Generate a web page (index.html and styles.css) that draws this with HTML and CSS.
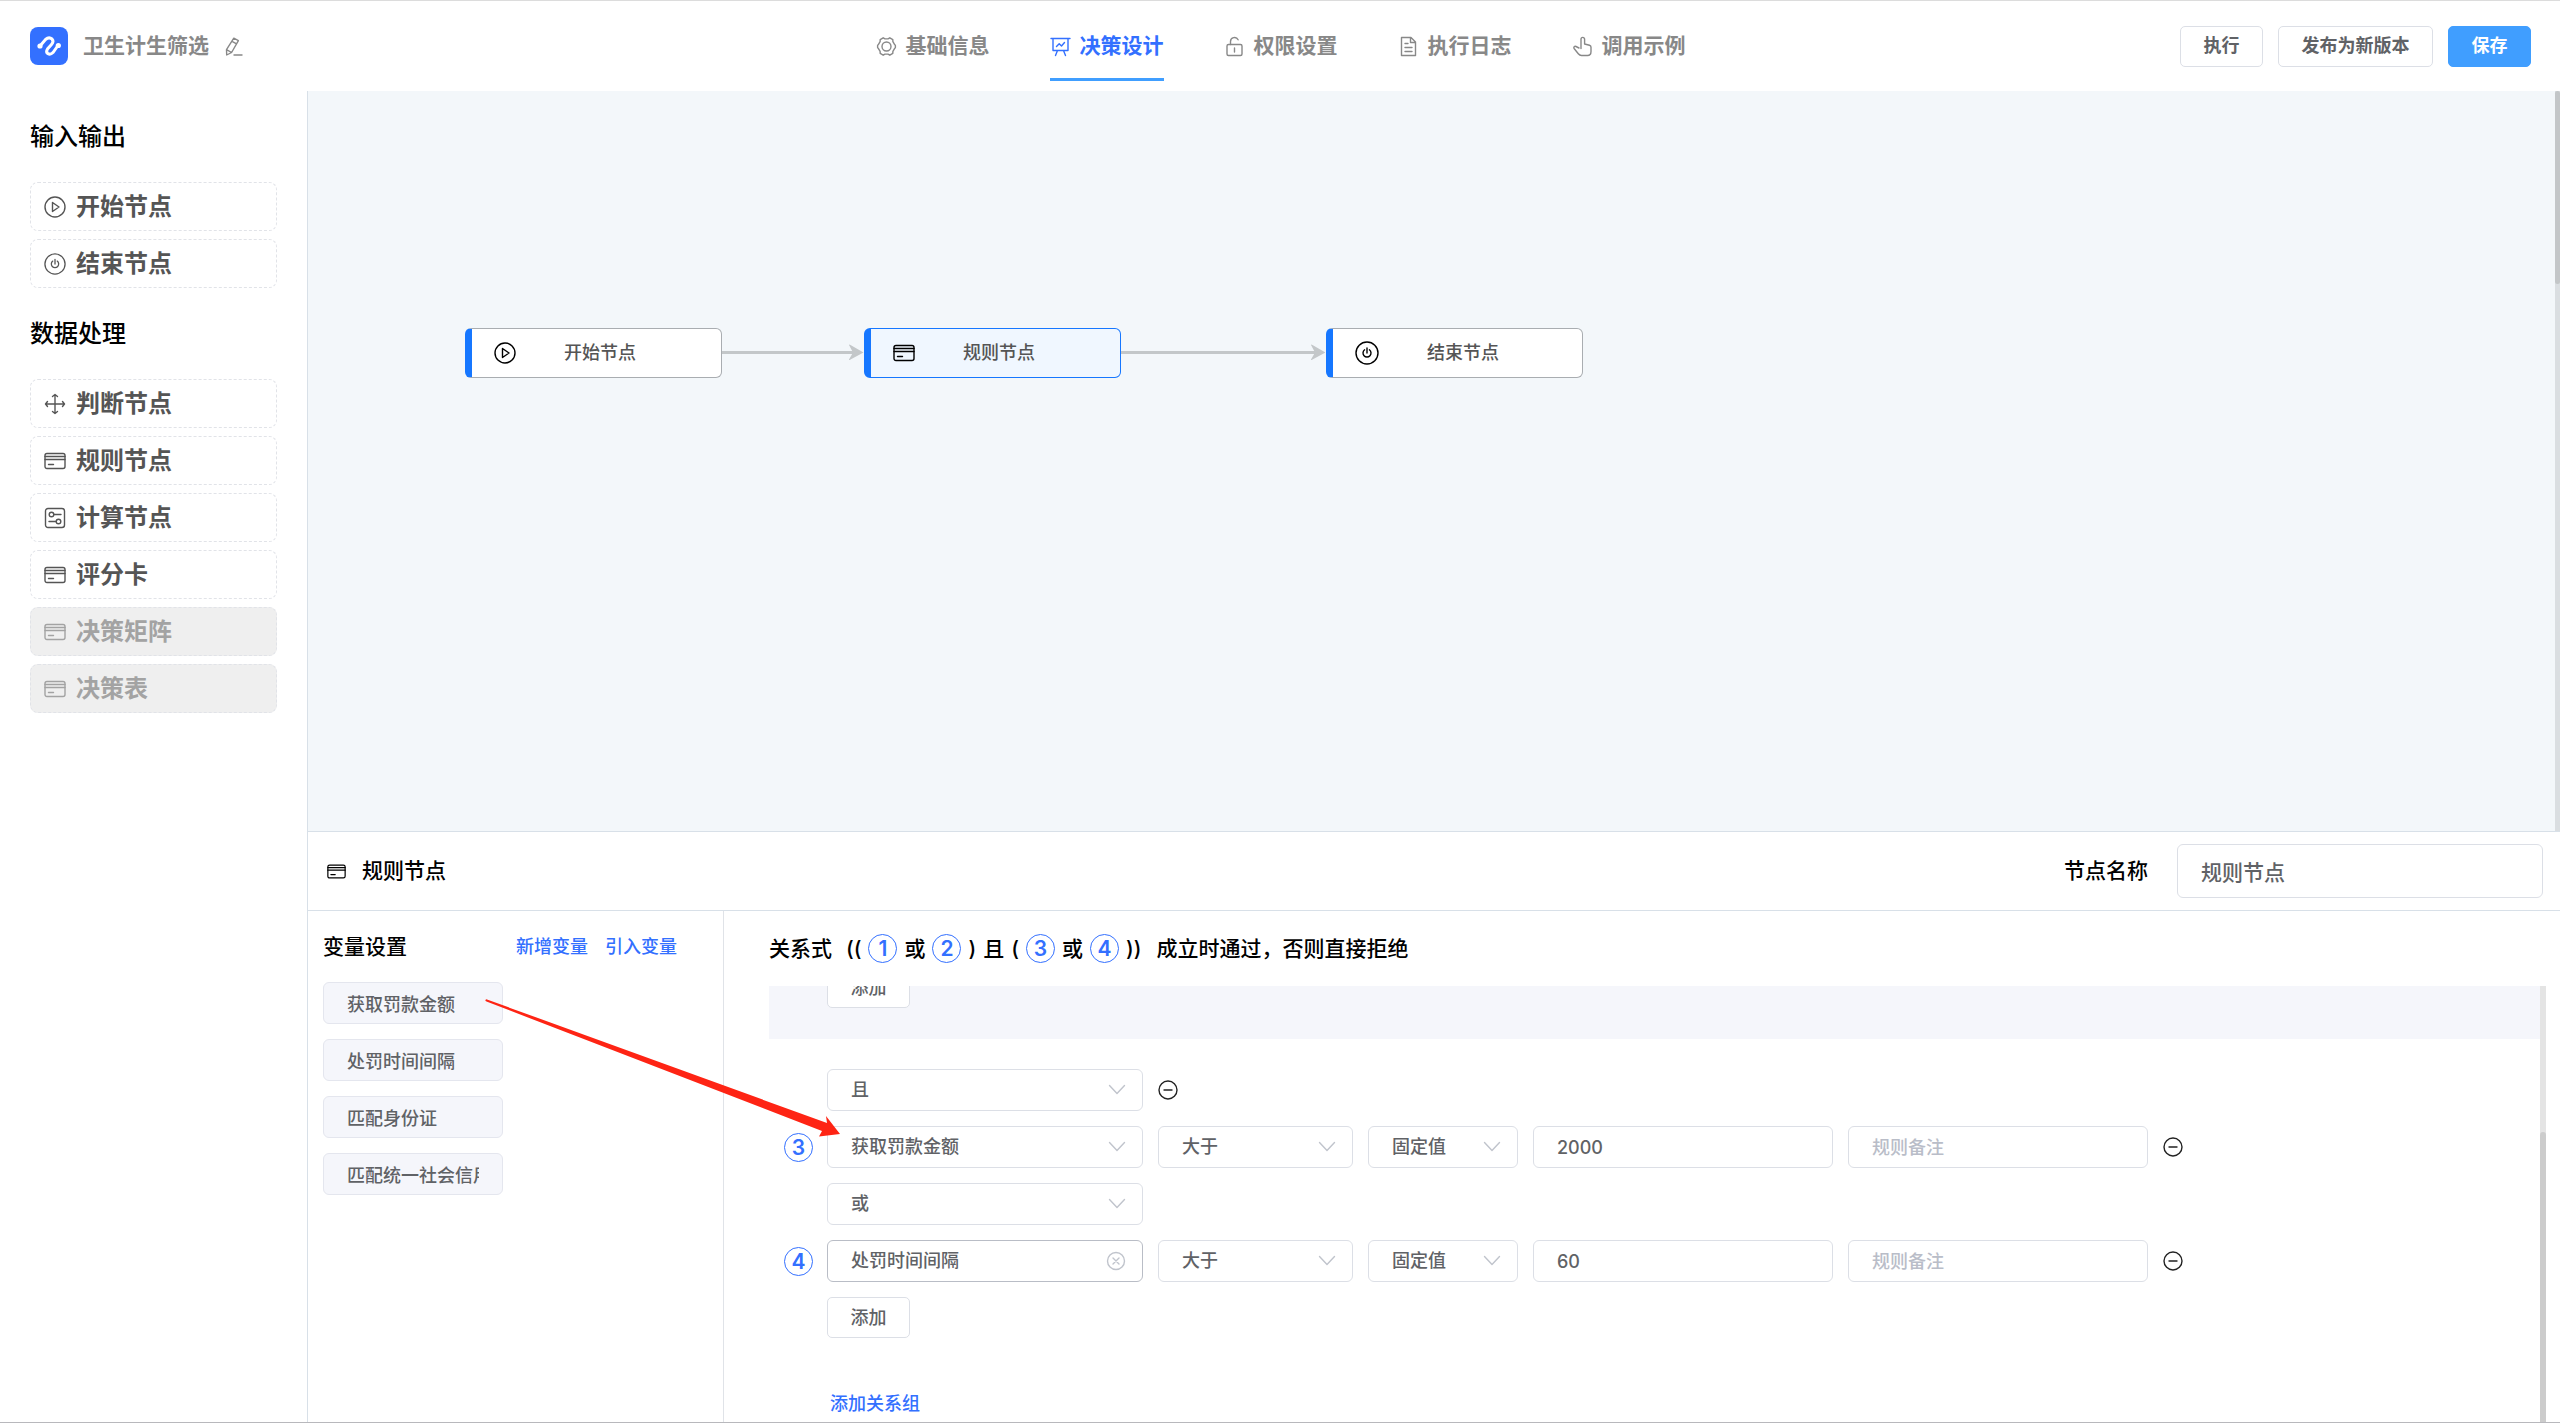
FILE: index.html
```html
<!DOCTYPE html>
<html lang="zh-CN">
<head>
<meta charset="utf-8">
<title>卫生计生筛选</title>
<link rel="stylesheet" href="styles.css">
</head>
<body>
<svg class="sprite" aria-hidden="true">
  <symbol id="i-play" viewBox="0 0 22 22"><circle cx="11" cy="11" r="10"/><path d="M8.5 6.5v9l6.5-4.5z"/></symbol>
  <symbol id="i-power" viewBox="0 0 24 24"><circle cx="12" cy="12" r="11"/><path d="M9.6 8.8a4 4 0 1 0 4.8 0M12 7v5"/></symbol>
  <symbol id="i-move" viewBox="0 0 22 22"><path d="M11 1.500v19M1.500 11h19M8.500 3.500L11 1.500l2.500 2M8.500 18.500l2.500 2 2.500-2M3.500 8.500L1.500 11l2 2.500M18.500 8.500l2 2.500-2 2.500"/></symbol>
  <symbol id="i-card" viewBox="0 0 22 22"><rect x="1" y="3.500" width="20" height="15" rx="2"/><path d="M1 6.500h20M1 9.500h20M4.500 14.500h5"/></symbol>
  <symbol id="i-calc" viewBox="0 0 22 22"><rect x="1.500" y="1.500" width="19" height="19" rx="2.500"/><circle cx="7.500" cy="7.500" r="2.300"/><path d="M10 7.500h7M5 14.500h7"/><circle cx="14.500" cy="14.500" r="2.300"/></symbol>
  <symbol id="i-gear" viewBox="0 0 21 21"><path d="M7.200 1.800L9 2.900h3l1.800-1.100 3 1.800.1 2.100 1.500 2.500 1 1.200v2.200l-1 1.200-1.500 2.500-.1 2.100-3 1.800-1.800-1.100H9l-1.800 1.100-3-1.800-.1-2.100-1.500-2.500-1-1.200V9.400l1-1.200 1.500-2.500.1-2.100z"/><circle cx="10.500" cy="10.500" r="4.500"/></symbol>
  <symbol id="i-board" viewBox="0 0 21 21"><path d="M1 2.500h19M3 2.500v12h15v-12M7.500 14.500l-2 5M13.500 14.500l2 5M6.500 10.500l2.700-2.800 2.300 2.300 3-3.500"/></symbol>
  <symbol id="i-lock" viewBox="0 0 21 21"><rect x="3" y="8.500" width="15" height="11" rx="1.500"/><path d="M6.500 8.500V5.500a4 4 0 0 1 7.600-1.700M10.500 12v4"/></symbol>
  <symbol id="i-doc" viewBox="0 0 21 21"><path d="M3.500 1.500h9.500l4.500 4.500v13.500h-14zM12.500 1.500v5h5M7 7.500h3M7 11.500h7M7 15.500h7"/></symbol>
  <symbol id="i-tap" viewBox="0 0 21 21"><path d="M9 12.500V3.200a1.800 1.800 0 0 1 3.600 0V8l4.900 1.200a2 2 0 0 1 1.500 2v4.300c0 2.500-1.500 4-3.500 4H9.500c-1.500 0-2.300-.6-3.200-1.700l-4.200-5.300c-.8-1.200.4-2.700 1.900-2l3 1.500"/></symbol>
  <symbol id="i-edit" viewBox="0 0 19 19"><path d="M9.800 1.200l4.600 2.500-6.800 11.800-4.900 2.500-.2-5.300zM8 4.300l4.600 2.500M2.500 12.700l5.100 2.800M10 18h8"/></symbol>
  <symbol id="i-down" viewBox="0 0 18 18"><path d="M1.500 4.500l7.500 8 7.500-8"/></symbol>
  <symbol id="i-clear" viewBox="0 0 20 20"><circle cx="10" cy="10" r="8.500"/><path d="M7 7l6 6M13 7l-6 6"/></symbol>
  <symbol id="i-minus" viewBox="0 0 20 20"><circle cx="10" cy="10" r="9"/><path d="M6 10h8"/></symbol>
</svg>

<header class="topbar">
  <div class="brand">
    <svg class="logo" viewBox="0 0 38 38"><rect width="38" height="38" rx="8"/><path d="M10 19l5.500-6.500Q19 9.500 22 12q2.200 2.500-.5 5.500l-4 4.500q-2 3 .5 4.700 2.500 1.300 5-1.200l5-7"/><circle cx="10" cy="19" r="2.600"/><circle cx="28.300" cy="18.500" r="2.600"/></svg>
    <span class="brand-name">卫生计生筛选</span>
    <button class="icon-btn edit" aria-label="编辑名称"><svg class="icon i19"><use href="#i-edit"/></svg></button>
  </div>
  <nav class="tabs">
    <a class="tab" href="#info"><svg class="icon i21"><use href="#i-gear"/></svg>基础信息</a>
    <a class="tab active" href="#design"><svg class="icon i21"><use href="#i-board"/></svg>决策设计</a>
    <a class="tab" href="#auth"><svg class="icon i21"><use href="#i-lock"/></svg>权限设置</a>
    <a class="tab" href="#log"><svg class="icon i21"><use href="#i-doc"/></svg>执行日志</a>
    <a class="tab" href="#demo"><svg class="icon i21"><use href="#i-tap"/></svg>调用示例</a>
  </nav>
  <div class="actions">
    <button class="btn">执行</button>
    <button class="btn wide">发布为新版本</button>
    <button class="btn primary">保存</button>
  </div>
</header>

<main class="main">
  <aside class="sidebar">
    <h2 class="side-title">输入输出</h2>
    <div class="side-list">
      <button class="side-item"><svg class="icon i22"><use href="#i-play"/></svg>开始节点</button>
      <button class="side-item"><svg class="icon i22"><use href="#i-power"/></svg>结束节点</button>
    </div>
    <h2 class="side-title">数据处理</h2>
    <div class="side-list">
      <button class="side-item"><svg class="icon i22"><use href="#i-move"/></svg>判断节点</button>
      <button class="side-item"><svg class="icon i22"><use href="#i-card"/></svg>规则节点</button>
      <button class="side-item"><svg class="icon i22"><use href="#i-calc"/></svg>计算节点</button>
      <button class="side-item"><svg class="icon i22"><use href="#i-card"/></svg>评分卡</button>
      <button class="side-item" disabled><svg class="icon i22"><use href="#i-card"/></svg>决策矩阵</button>
      <button class="side-item" disabled><svg class="icon i22"><use href="#i-card"/></svg>决策表</button>
    </div>
  </aside>

  <div class="workspace">
    <section class="canvas">
      <div class="node n1"><svg class="icon i22"><use href="#i-play"/></svg><span class="node-name">开始节点</span></div>
      <div class="node n2 selected"><svg class="icon i22"><use href="#i-card"/></svg><span class="node-name">规则节点</span></div>
      <div class="node n3"><svg class="icon i24"><use href="#i-power"/></svg><span class="node-name">结束节点</span></div>
      <svg class="edge e1" width="142" height="16"><path class="line" d="M0 8.500h132"/><path class="head" d="M127 1q0-1 1.500 0l13 7.500-13 7q-1.500 1-1.500 0l4-7z"/></svg>
      <svg class="edge e2" width="204" height="16"><path class="line" d="M0 8.500h194"/><path class="head" d="M190 1q0-1 1.500 0l13 7.500-13 7q-1.500 1-1.500 0l4-7z"/></svg>
      <div class="canvas-scroll"><div class="canvas-thumb"></div></div>
    </section>

    <section class="panel">
      <div class="panel-head">
        <svg class="icon i19"><use href="#i-card"/></svg>
        <h3 class="heading">规则节点</h3>
        <label class="heading name-label" for="node-name">节点名称</label>
        <input class="name-input" id="node-name" value="规则节点">
      </div>
      <div class="panel-body">
        <div class="vars">
          <div class="vars-head">
            <h3 class="heading">变量设置</h3>
            <div class="vars-links"><a href="#new">新增变量</a><a href="#import">引入变量</a></div>
          </div>
          <div class="vars-list">
            <input class="var" readonly aria-label="变量1" value="获取罚款金额">
            <input class="var" readonly aria-label="变量2" value="处罚时间间隔">
            <input class="var" readonly aria-label="变量3" value="匹配身份证">
            <input class="var" readonly aria-label="变量4" value="匹配统一社会信用代码">
          </div>
        </div>

        <div class="rules">
          <div class="formula">
            <span class="lead">关系式</span><span>((</span><span class="badge">1</span><span>或</span><span class="badge">2</span><span>)</span><span>且</span><span>(</span><span class="badge">3</span><span>或</span><span class="badge">4</span><span>))</span><span class="tail">成立时通过，否则直接拒绝</span>
          </div>
          <div class="rules-view">
            <div class="rules-list">
              <div class="group shaded">
                <div class="row"><button class="btn add">添加</button></div>
              </div>
              <div class="group">
                <div class="row">
                  <span class="sel var-sel"><select aria-label="组关系"><option>且</option></select><svg class="icon i18"><use href="#i-down"/></svg></span>
                  <button class="icon-btn" aria-label="删除组"><svg class="icon i20"><use href="#i-minus"/></svg></button>
                </div>
                <div class="row numbered">
                  <span class="badge">3</span>
                  <span class="sel var-sel"><select aria-label="变量"><option>获取罚款金额</option></select><svg class="icon i18"><use href="#i-down"/></svg></span>
                  <span class="sel op-sel"><select aria-label="比较"><option>大于</option></select><svg class="icon i18"><use href="#i-down"/></svg></span>
                  <span class="sel kind-sel"><select aria-label="类型"><option>固定值</option></select><svg class="icon i18"><use href="#i-down"/></svg></span>
                  <input class="field" aria-label="值" value="2000">
                  <input class="field" aria-label="备注" placeholder="规则备注">
                  <button class="icon-btn" aria-label="删除规则3"><svg class="icon i20"><use href="#i-minus"/></svg></button>
                </div>
                <div class="row">
                  <span class="sel var-sel"><select aria-label="关系"><option>或</option></select><svg class="icon i18"><use href="#i-down"/></svg></span>
                </div>
                <div class="row numbered">
                  <span class="badge">4</span>
                  <span class="sel var-sel hover"><select aria-label="变量"><option>处罚时间间隔</option></select><svg class="icon i20"><use href="#i-clear"/></svg></span>
                  <span class="sel op-sel"><select aria-label="比较"><option>大于</option></select><svg class="icon i18"><use href="#i-down"/></svg></span>
                  <span class="sel kind-sel"><select aria-label="类型"><option>固定值</option></select><svg class="icon i18"><use href="#i-down"/></svg></span>
                  <input class="field" aria-label="值" value="60">
                  <input class="field" aria-label="备注" placeholder="规则备注">
                  <button class="icon-btn" aria-label="删除规则4"><svg class="icon i20"><use href="#i-minus"/></svg></button>
                </div>
                <div class="row"><button class="btn add">添加</button></div>
              </div>
              <div class="add-group"><a href="#group">添加关系组</a></div>
            </div>
            <div class="rules-scroll"><div class="rules-thumb"></div></div>
          </div>
        </div>

        <svg class="pointer" width="360" height="142" viewBox="0 0 360 142" aria-hidden="true"><path d="M.5 1Q1 0 2 .5L342 124l-1-7 14 18-21 2.500 3-5.500L1.500 2.500Q0 2 .5 1z"/></svg>
      </div>
    </section>
  </div>
</main>
</body>
</html>
```
FILE: styles.css
```css
* { box-sizing: border-box; }

body {
  margin: 0;
  height: 100vh;
  display: flex;
  flex-direction: column;
  overflow: hidden;
  border-top: 1px solid #dcdcdc;
  border-bottom: 1px solid #b8b8bc;
  background: #fff;
  color: #000;
  font: 500 18px/24px Inter, "Noto Sans CJK SC", sans-serif;
}

h2, h3 { margin: 0; font-weight: 500; }
a { color: #3370ff; text-decoration: none; }
button, input, select { font: inherit; margin: 0; }

.sprite { position: absolute; width: 0; height: 0; }
.icon { flex: none; fill: none; stroke: currentColor; stroke-width: 1.4; stroke-linejoin: round; stroke-linecap: round; }
.i18 { width: 18px; height: 18px; }
.i19 { width: 19px; height: 19px; }
.i20 { width: 20px; height: 20px; }
.i21 { width: 21px; height: 21px; }
.i22 { width: 22px; height: 22px; }
.i24 { width: 24px; height: 24px; }
.icon-btn { display: flex; padding: 0; border: 0; background: none; color: #222; }

/* Top bar */
.topbar {
  flex: none;
  height: 90px;
  padding: 0 29px 0 30px;
  display: grid;
  grid-template-columns: 1fr auto 1fr;
  align-items: center;
  font-weight: 600;
}
.brand { display: flex; align-items: center; gap: 15px; color: #888; font-size: 21px; }
.brand .edit { color: #888; }
.logo { width: 38px; height: 38px; fill: #3370ff; }
.logo path { fill: none; stroke: #fff; stroke-width: 3; stroke-linecap: round; }
.logo circle { fill: #fff; }
.tabs { display: flex; gap: 60px; }
.tab {
  display: flex;
  align-items: center;
  gap: 9px;
  height: 70px;
  border: solid transparent;
  border-width: 3px 0;
  color: #888;
  font-size: 21px;
}
.tab.active { color: #3370ff; border-bottom-color: #409eff; }
.actions { display: flex; justify-content: flex-end; gap: 15px; }
.btn {
  width: 83px;
  height: 41px;
  padding: 0;
  border: 1px solid #dcdfe6;
  border-radius: 5px;
  background: #fff;
  color: #606266;
}
.btn.wide { width: 155px; }
.btn.primary { border-color: #409eff; background: #409eff; color: #fff; }

/* Sidebar */
.main { flex: 1; min-height: 0; display: flex; }
.sidebar { flex: none; width: 308px; padding: 0 30px; border-right: 1px solid #d8e0e8; }
.side-title { padding-top: 30px; font-size: 24px; line-height: 32px; }
.side-list { display: flex; flex-direction: column; gap: 8px; padding-top: 29px; }
.side-item {
  display: flex;
  align-items: center;
  gap: 10px;
  height: 49px;
  padding: 0 13px;
  border: 1px dashed #e1e3e8;
  border-radius: 8px;
  background: #fff;
  color: #555;
  font-size: 24px;
  font-weight: 600;
}
.side-item:disabled { background: #efefef; color: #a3a3a3; }

/* Canvas */
.workspace { flex: 1; min-width: 0; display: flex; flex-direction: column; }
.canvas { position: relative; flex: 1; min-height: 0; background: #f3f7fa; }
.node {
  position: absolute;
  top: 237px;
  display: flex;
  align-items: center;
  gap: 48px;
  width: 257px;
  height: 50px;
  padding-left: 22px;
  border: 1px solid #a9adb1;
  border-left: 7px solid #1677ff;
  border-radius: 6px;
  background: #fff;
}
.node-name { color: #555; }
.node.selected { border-color: #1677ff; background: #f0f7ff; }
.n1 { left: 157px; }
.n2 { left: 556px; }
.n3 { left: 1018px; }
.edge { position: absolute; top: 253px; }
.edge .line { stroke: #c3c7c9; stroke-width: 3; }
.edge .head { fill: #c3c7c9; }
.e1 { left: 414px; }
.e2 { left: 813px; }
.canvas-scroll { position: absolute; top: 0; right: 0; bottom: 0; width: 5px; background: #dadee1; }
.canvas-thumb { height: 193px; border-radius: 3px; background: #c3c6c8; }

/* Node panel */
.panel { flex: none; border-top: 1px solid #d8e0e8; }
.panel-head {
  display: flex;
  align-items: center;
  height: 79px;
  padding: 0 17px 0 19px;
  border-bottom: 1px solid #d8e0e8;
}
.panel-head .icon { margin-right: 16px; }
.heading { font-size: 21px; line-height: 28px; }
.name-label { margin-left: auto; }
.name-input {
  width: 366px;
  height: 54px;
  margin-left: 29px;
  padding: 0 23px;
  border: 1px solid #dcdfe6;
  border-radius: 6px;
  color: #606266;
  font-size: 21px;
}
.panel-body { position: relative; display: flex; }
.vars { flex: none; width: 416px; padding-left: 15px; border-right: 1px solid #e0e3e8; }
.vars-head { display: flex; align-items: center; justify-content: space-between; height: 71px; padding-right: 46px; }
.vars-links { display: flex; gap: 17px; }
.vars-list { display: flex; flex-direction: column; gap: 15px; }
.var {
  width: 180px;
  height: 42px;
  padding: 0 23px;
  border: 1px solid #e4e6ee;
  border-radius: 6px;
  background: #f5f6fb;
  color: #606266;
}

/* Rules */
.rules { flex: 1; min-width: 0; padding: 0 14px 0 45px; }
.formula { display: flex; align-items: center; gap: 7px; height: 75px; font-size: 21px; }
.lead { margin-right: 7px; }
.tail { margin-left: 8px; }
.badge {
  flex: none;
  width: 29px;
  height: 29px;
  border: 1px solid #3370ff;
  border-radius: 50%;
  color: #3370ff;
  font-size: 21px;
  font-weight: 600;
  line-height: 27px;
  text-align: center;
}
.rules-view { display: flex; height: 436px; overflow: hidden; }
.rules-list { flex: 1; min-width: 0; display: flex; flex-direction: column; justify-content: flex-end; }
.rules-scroll { width: 6px; padding-top: 146px; background: #e4e4e4; }
.rules-thumb { height: 100%; border-radius: 3px 3px 0 0; background: #ccc; }
.group { flex: none; display: flex; flex-direction: column; gap: 15px; padding: 30px 15px 31px 58px; }
.shaded { background: #f5f6fb; }
.row { display: flex; align-items: center; gap: 15px; }
.numbered { margin-left: -43px; }
.numbered .badge { margin-right: -1px; }
.sel { position: relative; display: flex; align-items: center; color: #c0c4cc; }
.sel .icon { position: absolute; right: 17px; pointer-events: none; }
.sel select, .field {
  width: 100%;
  height: 42px;
  padding: 0 23px;
  border: 1px solid #dcdfe6;
  border-radius: 6px;
  background: #fff;
  color: #606266;
}
.sel select { appearance: none; }
.sel.hover select { border-color: #b9bdc6; }
.var-sel { width: 316px; }
.op-sel { width: 195px; }
.kind-sel { width: 150px; }
.row .field { width: 300px; }
.field::placeholder { color: #b9bdc8; }
.add-group { flex: none; padding: 21px 61px 4px; line-height: 28px; }

/* Red arrow from a variable to the select it fills */
.pointer { position: absolute; left: 177px; top: 88px; fill: #fe2414; pointer-events: none; }
```
